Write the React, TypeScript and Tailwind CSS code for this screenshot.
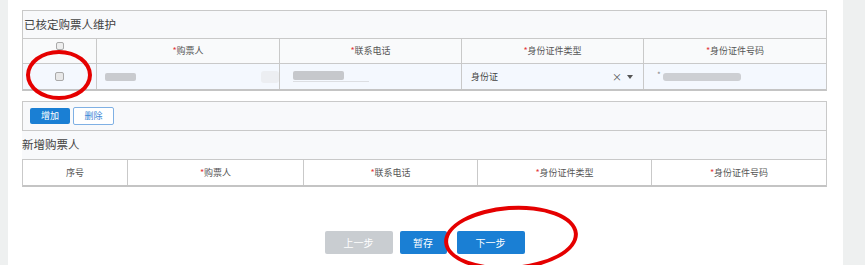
import React from "react";

const font = { fontFamily: '"Noto Sans CJK SC", "Noto Sans", sans-serif' };

function Star() {
  return <span className="text-[#e4393c]">*</span>;
}

function Cell({ w, children, last, className = "" }: { w: string; children?: React.ReactNode; last?: boolean; className?: string }) {
  return (
    <div className={`${w} flex items-center justify-center ${last ? "" : "border-r border-[#c9c9c9]"} ${className}`}>
      {children}
    </div>
  );
}

export default function App() {
  return (
    <div className="flex w-[865px] h-[265px] overflow-hidden bg-white relative" style={font}>
      <div className="w-[8px] bg-[#eef0f0]" />
      <div className="flex-1 flex flex-col pt-[10px] pl-[14px] pr-[16px]">
        {/* Panel 1 */}
        <div className="border border-[#c9c9c9] border-b-2 border-b-[#c4c4c4] flex flex-col">
          <div className="h-[28px] bg-[#f8f9fb] flex items-center text-[11.5px] text-[#444] border-b border-[#c9c9c9] pl-[1px]">
            已核定购票人维护
          </div>
          <div className="h-[25px] flex bg-[#f9fafb] border-b border-[#c9c9c9] text-[9px] text-[#555]">
            <Cell w="w-[74px]">
              <div className="w-[8px] h-[8px] border border-[#aaa] rounded-[2px] bg-[#eee] -mt-[10px]" />
            </Cell>
            <Cell w="w-[183px]"><Star />购票人</Cell>
            <Cell w="w-[182px]"><Star />联系电话</Cell>
            <Cell w="w-[182px]"><Star />身份证件类型</Cell>
            <Cell w="flex-1" last><Star />身份证件号码</Cell>
          </div>
          <div className="h-[25px] flex bg-[#f4f8fe] text-[9px] text-[#444]">
            <Cell w="w-[74px]">
              <div className="w-[9px] h-[9px] border border-[#aaa] rounded-[2px] bg-[#e8e8e8]" />
            </Cell>
            <Cell w="w-[183px]" className="!justify-between pl-[8px] pr-[0px]">
              <div className="w-[31px] h-[8px] bg-[#c9cbcf] rounded-[2px]" />
              <div className="w-[18px] h-[12px] bg-[#eceef2] rounded-[3px]" />
            </Cell>
            <Cell w="w-[182px]" className="!justify-start pl-[13px]">
              <div className="flex flex-col">
                <div className="w-[51px] h-[9px] bg-[#c6c8cc] rounded-[2px]" />
                <div className="w-[76px] h-[1px] bg-[#dcdee2] mt-[1px]" />
              </div>
            </Cell>
            <Cell w="w-[182px]" className="!justify-between pl-[9px] pr-[10px]">
              <span>身份证</span>
              <span className="flex items-center gap-[5px] text-[#555]">
                <span className="text-[10px]">×</span>
                <svg width="6" height="4" viewBox="0 0 6 4"><path d="M0 0h6L3 4z" fill="#555" /></svg>
              </span>
            </Cell>
            <Cell w="flex-1" last className="!justify-start pl-[13px] gap-[2px]">
              <span className="text-[8px] text-[#888] -mt-[3px]">*</span>
              <div className="w-[78px] h-[8px] bg-[#cdcfd3] rounded-[3px]" />
            </Cell>
          </div>
        </div>

        {/* Panel 2 */}
        <div className="mt-[10px] border border-[#c9c9c9] border-b-2 border-b-[#c4c4c4] flex flex-col">
          <div className="h-[29px] bg-[#f8f9fb] flex items-center gap-[3px] pl-[7px] border-b border-[#c9c9c9]">
            <button className="w-[40px] h-[16px] bg-[#1a7fd4] text-white text-[9px] rounded-[2px] flex items-center justify-center">增加</button>
            <button className="w-[41px] h-[18px] bg-white text-[#3b86d6] text-[9px] rounded-[2px] border border-[#7fb0e4] flex items-center justify-center">删除</button>
          </div>
          <div className="h-[29px] bg-[#f8f9fb] flex items-center text-[11.5px] text-[#444] border-b border-[#c9c9c9] -ml-[1px]">
            新增购票人
          </div>
          <div className="h-[25px] flex bg-white text-[9px] text-[#555]">
            <Cell w="w-[105px]">序号</Cell>
            <Cell w="w-[176px]"><Star />购票人</Cell>
            <Cell w="w-[174px]"><Star />联系电话</Cell>
            <Cell w="w-[174px]"><Star />身份证件类型</Cell>
            <Cell w="flex-1" last><Star />身份证件号码</Cell>
          </div>
        </div>

        <div className="flex justify-center mt-[44px]">
          <button className="w-[68px] h-[23px] bg-[#c9cdd1] text-white text-[10px] rounded-[2px]">上一步</button>
          <button className="w-[47px] h-[23px] bg-[#1a7fd4] text-white text-[10px] rounded-[2px] ml-[7px]">暂存</button>
          <button className="w-[68px] h-[23px] bg-[#1a7fd4] text-white text-[10px] rounded-[2px] ml-[10px]">下一步</button>
        </div>
      </div>
      <div className="w-[22px] bg-[#eef0f0]" />

      {/* red annotation ellipses */}
      <div className="absolute left-[26px] top-[50px] w-[66px] h-[50px] rounded-[50%] border-[4px] border-[#e50000]" />
      <div className="absolute left-[444px] top-[206px] w-[134px] h-[64px] rounded-[50%] border-[4px] border-[#e50000] -rotate-[4deg]" />
    </div>
  );
}
